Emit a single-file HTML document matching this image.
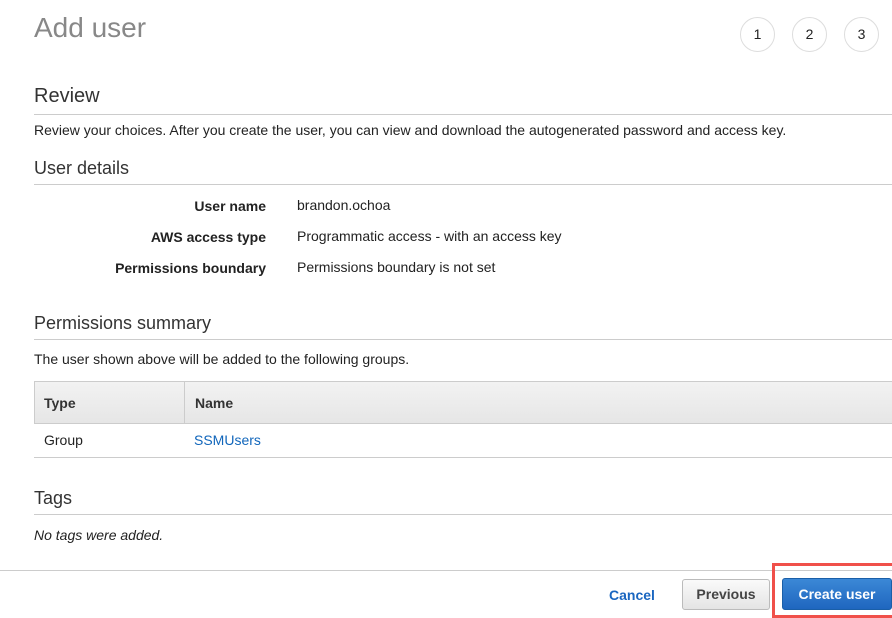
<!DOCTYPE html>
<html><head><style>
*{margin:0;padding:0;box-sizing:border-box}
body{width:892px;height:618px;background:#fff;font-family:"Liberation Sans",Arial,sans-serif;color:#222;position:relative;overflow:hidden;font-size:14px}
.a{position:absolute;white-space:nowrap}
.h1{font-size:28px;color:#888;left:34px;top:12px}
.c{position:absolute;width:35px;height:35px;border:1px solid #ddd;border-radius:50%;text-align:center;line-height:33px;font-size:14px;top:17px}
.h2{font-size:20px;color:#333}
.h3{font-size:18px;color:#333}
.line{position:absolute;left:34px;right:0;height:1px;background:#ccc}
.lbl{font-weight:bold;right:626px;font-size:14px}
</style></head><body>
<div class="a h1">Add user</div>
<div class="c" style="left:740px">1</div>
<div class="c" style="left:792px">2</div>
<div class="c" style="left:844px">3</div>
<div class="a h2" style="left:34px;top:85px">Review</div>
<div class="line" style="top:114px"></div>
<div class="a" style="left:34px;top:122px">Review your choices. After you create the user, you can view and download the autogenerated password and access key.</div>
<div class="a h3" style="left:34px;top:158px">User details</div>
<div class="line" style="top:184px"></div>
<div class="a lbl" style="top:198px">User name</div>
<div class="a" style="left:297px;top:197px">brandon.ochoa</div>
<div class="a lbl" style="top:229px">AWS access type</div>
<div class="a" style="left:297px;top:228px">Programmatic access - with an access key</div>
<div class="a lbl" style="top:260px">Permissions boundary</div>
<div class="a" style="left:297px;top:259px">Permissions boundary is not set</div>
<div class="a h3" style="left:34px;top:313px">Permissions summary</div>
<div class="line" style="top:339px"></div>
<div class="a" style="left:34px;top:351px">The user shown above will be added to the following groups.</div>
<div class="a" style="left:34px;top:381px;right:0;height:43px;background:linear-gradient(#f2f2f2,#e6e6e6);border:1px solid #ccc;border-right:none"></div>
<div class="a" style="left:184px;top:381px;width:1px;height:43px;background:#ccc"></div>
<div class="a" style="left:44px;top:395px;font-weight:bold;color:#333">Type</div>
<div class="a" style="left:195px;top:395px;font-weight:bold;color:#333">Name</div>
<div class="a" style="left:44px;top:432px">Group</div>
<div class="a" style="left:194px;top:432px;color:#1166bb">SSMUsers</div>
<div class="line" style="top:457px"></div>
<div class="a h3" style="left:34px;top:488px">Tags</div>
<div class="line" style="top:514px"></div>
<div class="a" style="left:34px;top:527px;font-style:italic">No tags were added.</div>
<div class="a" style="left:0;right:0;top:570px;height:1px;background:#ccc"></div>
<div class="a" style="left:609px;top:587px;color:#1a66c0;font-weight:bold">Cancel</div>
<div class="a" style="left:682px;top:579px;width:88px;height:31px;border:1px solid #bbb;border-radius:3px;background:linear-gradient(#fafafa,#e4e4e4);text-align:center;line-height:29px;font-weight:bold;color:#444">Previous</div>
<div class="a" style="left:772px;top:563px;width:120px;height:55px;border:3px solid #f0504a;border-right:none"></div>
<div class="a" style="left:782px;top:578px;width:110px;height:32px;border:1px solid #1a5fa8;border-radius:3px;background:linear-gradient(#3b88d6,#1f66bf);text-align:center;line-height:30px;font-weight:bold;color:#fff">Create user</div>
</body></html>
